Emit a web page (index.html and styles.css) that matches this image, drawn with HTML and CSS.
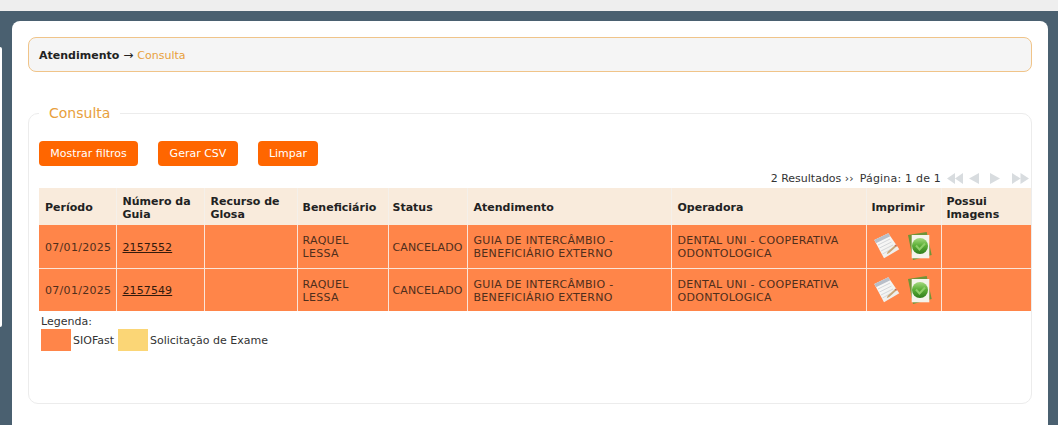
FILE: index.html
```html
<!DOCTYPE html>
<html lang="pt-BR">
<head>
<meta charset="utf-8">
<title>Consulta</title>
<link rel="stylesheet" href="styles.css">
</head>
<body>
<svg class="sprite" width="0" height="0" aria-hidden="true">
  <defs>
    <linearGradient id="ball" x1="0" y1="0" x2="0" y2="1">
      <stop offset="0" stop-color="#a5d97f"/>
      <stop offset="0.45" stop-color="#5fb13a"/>
      <stop offset="1" stop-color="#2f7d1c"/>
    </linearGradient>
    <linearGradient id="sheet" x1="0" y1="0" x2="1" y2="1">
      <stop offset="0" stop-color="#ffffff"/>
      <stop offset="1" stop-color="#e9e9e6"/>
    </linearGradient>
    <symbol id="note" viewBox="0 0 28 28">
      <path d="M2.300 8L16.300 1.300 27.300 17.300 12 26.300z" fill="url(#sheet)"/>
      <path d="M2.300 8L16.300 1.300 18.300 4.200 4 11.200z" fill="#b9bfc9"/>
      <path d="M6 13l12-6M7.500 16l12-6M9 19l12-6M10.500 22l8-4.500" stroke="#d5d7da" fill="none"/>
      <path d="M14.700 22.300l1-2.500 7.500-6.800 1.500 1.200-7.500 6.800z" fill="#c9a777"/>
      <path d="M22.600 13.500l1-.9 1.500 1.200-1 .9z" fill="#c46a5a"/>
    </symbol>
    <symbol id="check" viewBox="0 0 26 28">
      <path d="M0 3L18.700 0 23.700 23 5 28z" fill="#6f9437"/>
      <rect x="3.700" y="3" width="17.600" height="23.300" fill="#f5f4ec"/>
      <circle cx="12" cy="14" r="8" fill="url(#ball)"/>
      <path d="M8 13.500l3.500 4 5.500-6" fill="none" stroke="#8fce68" stroke-width="2"/>
    </symbol>
  </defs>
</svg>
<div class="topbar"></div>
<div class="shell">
  <aside class="sidebar"></aside>
  <main class="panel">
    <nav class="crumb"><b>Atendimento</b> <span class="arrow">→</span> <span class="crumb-cur">Consulta</span></nav>
    <fieldset class="box">
      <legend class="box-title">Consulta</legend>
      <div class="actions">
        <button class="btn">Mostrar filtros</button>
        <button class="btn btn-csv">Gerar CSV</button>
        <button class="btn btn-clear">Limpar</button>
      </div>
      <div class="pager">
        <span class="pager-count">2 Resultados ››</span>
        <span class="pager-page">Página: 1 de 1</span>
        <span class="pager-icons">
          <svg width="16" height="11" viewBox="0 0 16 11"><path d="M8 0v11L0 5.500zM16 0v11L8 5.500z"/></svg>
          <svg class="pi-prev" width="10" height="11" viewBox="0 0 10 11"><path d="M10 0v11L0 5.500z"/></svg>
          <svg class="pi-next" width="10" height="11" viewBox="0 0 10 11"><path d="M0 0v11l10-5.500z"/></svg>
          <svg class="pi-last" width="17" height="11" viewBox="0 0 17 11"><path d="M0 0v11l8.500-5.500zM8.500 0v11L17 5.500z"/></svg>
        </span>
      </div>
      <table class="grid">
        <colgroup>
          <col class="c1"><col class="c2"><col class="c3"><col class="c4"><col class="c5"><col class="c6"><col class="c7"><col class="c8"><col class="c9">
        </colgroup>
        <thead>
          <tr><th>Período</th><th>Número da Guia</th><th>Recurso de Glosa</th><th>Beneficiário</th><th>Status</th><th>Atendimento</th><th>Operadora</th><th>Imprimir</th><th>Possui Imagens</th></tr>
        </thead>
        <tbody>
          <tr>
            <td>07/01/2025</td><td><a href="#">2157552</a></td><td></td><td>RAQUEL LESSA</td><td class="status">CANCELADO</td>
            <td>GUIA DE INTERCÂMBIO - BENEFICIÁRIO EXTERNO</td><td>DENTAL UNI - COOPERATIVA ODONTOLOGICA</td>
            <td class="print"><div class="print-icons">
              <svg class="ico-note" width="28" height="28"><use href="#note"/></svg>
              <svg class="ico-check" width="26" height="28"><use href="#check"/></svg>
            </div></td><td></td>
          </tr>
          <tr>
            <td>07/01/2025</td><td><a href="#">2157549</a></td><td></td><td>RAQUEL LESSA</td><td class="status">CANCELADO</td>
            <td>GUIA DE INTERCÂMBIO - BENEFICIÁRIO EXTERNO</td><td>DENTAL UNI - COOPERATIVA ODONTOLOGICA</td>
            <td class="print"><div class="print-icons">
              <svg class="ico-note" width="28" height="28"><use href="#note"/></svg>
              <svg class="ico-check" width="26" height="28"><use href="#check"/></svg>
            </div></td><td></td>
          </tr>
        </tbody>
      </table>
      <div class="legend">
        <div class="legend-title">Legenda:</div>
        <div class="legend-row">
          <span class="swatch swatch-orange"></span><span class="legend-label">SIOFast</span>
          <span class="swatch swatch-yellow"></span><span class="legend-label">Solicitação de Exame</span>
        </div>
      </div>
    </fieldset>
  </main>
</div>
</body>
</html>
```
FILE: styles.css
```css
* { box-sizing: border-box; }
body {
  margin: 0;
  height: 425px;
  overflow: hidden;
  background: #4a6070;
  font-family: "DejaVu Sans", Verdana, sans-serif;
  font-size: 11px;
  color: #333;
}
.sprite { display: block; height: 0; }
.topbar { height: 11px; background: #eeeeee; }
.shell { display: flex; align-items: flex-start; padding-top: 10px; }
.sidebar {
  width: 2px;
  height: 280px;
  margin-top: 26px;
  margin-right: 10px;
  background: #fff;
  border-radius: 0 3px 3px 0;
}
.panel {
  width: 1036px;
  height: 420px;
  background: #fff;
  border-radius: 8px 8px 0 0;
  padding: 16px 16px 0;
}
.crumb {
  height: 35px;
  display: flex;
  align-items: center;
  gap: 4px;
  padding: 1px 10px 0;
  background: #f5f5f5;
  border: 1px solid #f0c489;
  border-radius: 8px;
  color: #222;
}
.crumb b { font-weight: bold; }
.arrow { font-size: 12px; }
.crumb-cur { color: #e8a03c; }
.box {
  margin: 33px 0 0;
  height: 299px;
  padding: 19px 0 0 10px;
  border: 1px solid #ececec;
  border-radius: 10px;
  min-width: 0;
}
.box-title {
  margin-left: 0;
  padding: 0 10px;
  font-size: 14px;
  line-height: 17px;
  color: #e8a03c;
}
.actions { display: flex; gap: 20px; }
.btn {
  height: 25px;
  width: 99px;
  padding: 0;
  border: 0;
  border-radius: 4px;
  background: #ff6600;
  color: #fff;
  font: 11px "DejaVu Sans", Verdana, sans-serif;
}
.btn-csv { width: 80px; }
.btn-clear { width: 60px; }
.pager {
  display: flex;
  justify-content: flex-end;
  align-items: center;
  gap: 6px;
  height: 22px;
  padding: 2px 2px 0 0;
}
.pager-page { letter-spacing: .2px; }
.pager-icons { display: flex; align-items: center; }
.pager-icons svg { fill: #d8dcdf; display: block; }
.pi-prev { margin-left: 6px; }
.pi-next { margin-left: 11px; }
.pi-last { margin-left: 12px; }
.grid {
  width: 992px;
  table-layout: fixed;
  border-collapse: collapse;
  line-height: 13px;
}
.c1 { width: 77px; } .c2 { width: 88px; } .c3 { width: 93px; }
.c4 { width: 91px; } .c5 { width: 79px; } .c6 { width: 204px; }
.c7 { width: 195px; } .c8 { width: 75px; } .c9 { width: 90px; }
.grid th {
  height: 37px;
  padding: 2px 5px 0;
  text-align: left;
  background: #f9ebdc;
  font-weight: bold;
  color: #222;
  border-right: 1px solid #f5f0ea;
}
.grid td {
  height: 43px;
  padding: 2px 5px 0;
  background: #ff8549;
  color: #4f2e1c;
  letter-spacing: .3px;
  border-right: 1px solid #fbe4d8;
  border-bottom: 1px solid #fbe4d8;
}
.grid th:first-child, .grid td:first-child { padding-left: 6px; padding-right: 0; }
.grid th:nth-child(2), .grid td:nth-child(2),
.grid th:nth-child(3), .grid th:nth-child(6), .grid td:nth-child(6),
.grid th:nth-child(7), .grid td:nth-child(7) { padding-left: 6px; }
.grid th:nth-child(5), .grid td.status { padding-left: 4px; }
.grid td.status { letter-spacing: .1px; }
.grid td.print { padding: 0 0 0 5px; }
.grid tr:last-child td { border-bottom: 0; }
.grid td:last-child, .grid th:last-child { border-right: 0; }
.grid a { color: #331a0c; letter-spacing: .1px; }
.print-icons { display: flex; gap: 8px; align-items: center; }
.ico-note, .ico-check { display: block; }
.legend { padding: 3px 0 0 2px; line-height: 15px; }
.legend-row { display: flex; align-items: center; height: 22px; }
.swatch { width: 30px; height: 22px; display: block; }
.swatch-orange { background: #ff8549; }
.swatch-yellow { background: #fbd676; }
.legend-label { padding: 1px 2px 0; }
.legend-label:nth-child(2) { margin-right: 2px; }
```
